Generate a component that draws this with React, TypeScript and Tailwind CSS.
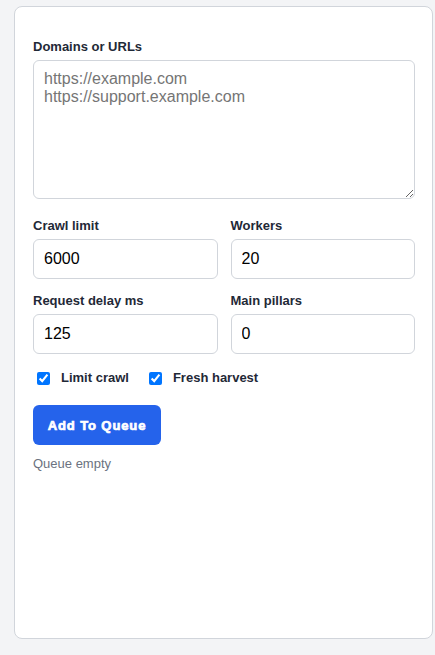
import React, { useState } from 'react';

const font = "font-['Liberation_Sans',Arial,sans-serif]";

function Field({ label, value, onChange }: { label: string; value: string; onChange: (v: string) => void }) {
  return (
    <label className="flex flex-col">
      <span className="pt-[1px] text-[13px] font-bold leading-4 text-[#1f2937]">{label}</span>
      <input
        value={value}
        onChange={(e) => onChange(e.target.value)}
        className="mt-[5px] h-10 w-full rounded-md border border-[#d1d5db] bg-white px-[10px] text-base text-black outline-none"
      />
    </label>
  );
}

export default function App() {
  const [crawlLimit, setCrawlLimit] = useState('6000');
  const [workers, setWorkers] = useState('20');
  const [delay, setDelay] = useState('125');
  const [pillars, setPillars] = useState('0');
  const [limitCrawl, setLimitCrawl] = useState(true);
  const [fresh, setFresh] = useState(true);

  return (
    <div className={`${font} min-h-[655px] bg-[#f3f4f6] pl-[14px] pt-[6px]`}>
      <div className="flex h-[633px] w-[419px] flex-col rounded-lg border border-[#d1d5db] bg-white pl-[18px] pr-[17px] pt-[31px]">
        {/* Domains */}
        <label className="flex flex-col">
          <span className="pt-[1px] text-[13px] font-bold leading-4 text-[#1f2937]">Domains or URLs</span>
          <textarea
            placeholder={'https://example.com\nhttps://support.example.com'}
            className="mt-[5px] h-[139px] w-full resize-y rounded-md border border-[#d1d5db] bg-white px-[10px] pb-[8px] pt-[9px] text-base leading-[18px] text-black outline-none placeholder:text-[#757575]"
          />
        </label>

        {/* Numbers */}
        <div className="mt-[18px] grid grid-cols-2 gap-x-[13px] gap-y-[13px]">
          <Field label="Crawl limit" value={crawlLimit} onChange={setCrawlLimit} />
          <Field label="Workers" value={workers} onChange={setWorkers} />
          <Field label="Request delay ms" value={delay} onChange={setDelay} />
          <Field label="Main pillars" value={pillars} onChange={setPillars} />
        </div>

        {/* Toggles */}
        <div className="mt-[16px] flex items-center gap-[20px] pl-[4px] text-[13px] font-bold leading-4 text-[#1f2937]">
          <label className="flex items-center gap-[11px]">
            <input type="checkbox" checked={limitCrawl} onChange={(e) => setLimitCrawl(e.target.checked)} className="m-0 h-[13px] w-[13px]" />
            Limit crawl
          </label>
          <label className="flex items-center gap-[11px]">
            <input type="checkbox" checked={fresh} onChange={(e) => setFresh(e.target.checked)} className="m-0 h-[13px] w-[13px]" />
            Fresh harvest
          </label>
        </div>

        <button className="mt-[19px] h-10 w-[128px] rounded-md bg-[#2563eb] pt-[2px] text-[13px] font-black tracking-[0.9px] text-white [-webkit-text-stroke:0.7px_white]">
          Add To Queue
        </button>

        <p className="mt-[11px] text-[13px] leading-4 text-[#6b7280]">Queue empty</p>
      </div>
    </div>
  );
}
